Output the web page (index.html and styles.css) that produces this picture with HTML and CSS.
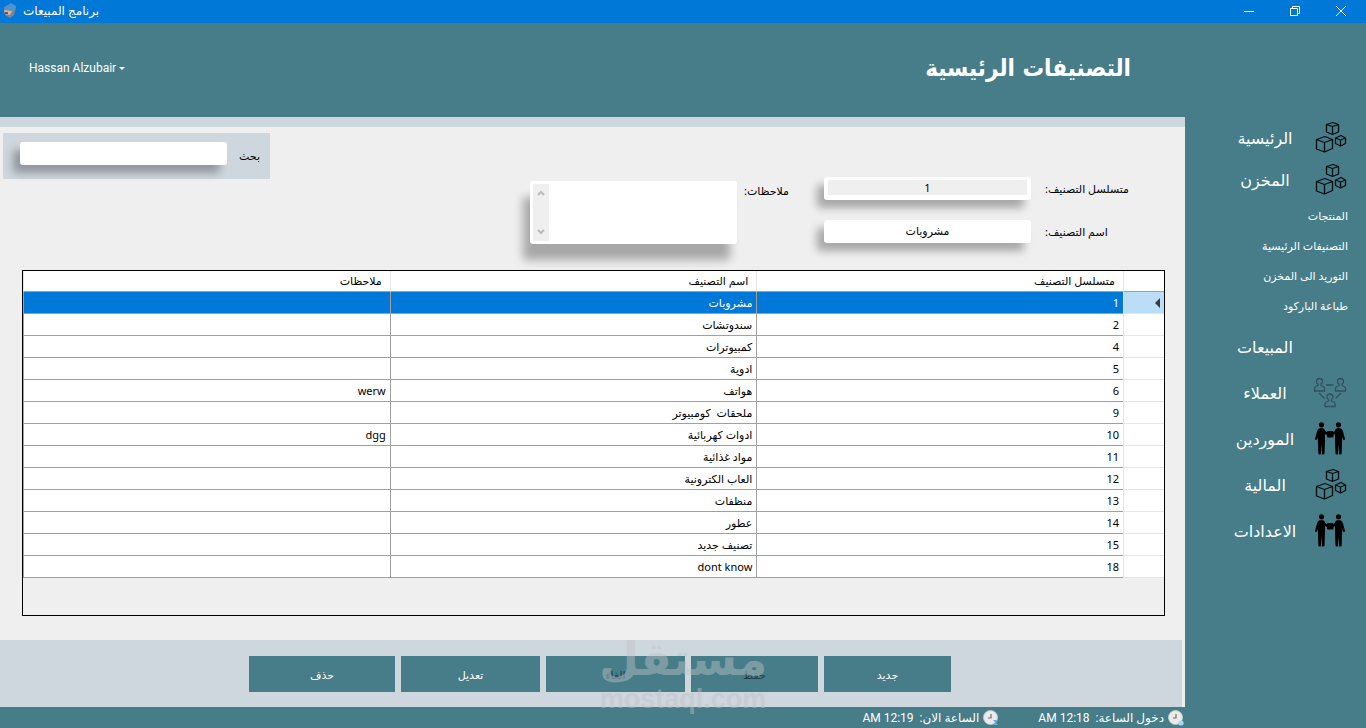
FILE: index.html
```html
<!DOCTYPE html>
<html lang="ar" dir="rtl">
<head>
    <meta charset="UTF-8">
    <title>برنامج المبيعات</title>
    <link rel="stylesheet" href="styles.css">
</head>
<body>
    <svg class="defs" width="0" height="0" aria-hidden="true">
        <symbol id="boxes" viewBox="0 0 36 34">
            <g fill="none" stroke="#0a0d10" stroke-width="1.3" stroke-linejoin="round">
                <path d="M13.5 3.5 L20 1.5 L25.5 3.5 V11 L19.5 13.5 L13.5 11 Z M13.5 3.5 L19.5 5.5 L25.5 3.5 M19.5 5.5 V13.5"/>
                <path d="M3.5 18.5 L12 15.5 L19.5 18.5 V27.5 L11.5 31 L3.5 28 Z M3.5 18.5 L11.5 21.5 L19.5 18.5 M11.5 21.5 V31"/>
                <path d="M22.5 17 L28 14.5 L32.5 17 V22.5 L27.5 25 L22.5 22.5 Z M22.5 17 L27.5 19 L32.5 17 M27.5 19 V25"/>
            </g>
        </symbol>
        <symbol id="people" viewBox="0 0 36 34">
            <g fill="none" stroke="#30505b" stroke-width="1.3" stroke-linejoin="round">
                <path id="p" d="M1.5 15 V12.5 Q1.5 10.5 5 9.5 L5 8 Q3 6.5 3.5 4.5 Q4.2 2.5 6.5 2.5 Q8.8 2.5 9.5 4.5 Q10 6.5 8 8 L8 9.5 Q11.5 10.5 11.5 12.5 V15 Z"/>
                <use href="#p" x="21"/>
                <use href="#p" x="10.5" y="15.5"/>
                <path d="M13 9 H20.5 M6 17 L11.5 22.5 M28 17 L22.5 22.5"/>
            </g>
        </symbol>
        <symbol id="workers" viewBox="0 0 36 34">
            <circle cx="8.5" cy="2.8" r="2.6"/>
            <circle cx="25.5" cy="2.8" r="2.6"/>
            <rect x="14" y="9" width="6.500" height="6.500" rx="1"/>
            <path id="w" d="M6.500 6.200 H10 Q11.500 6.500 12.200 9 L15 11 V13 L12 12.300 L12 19 L11.500 31.500 Q11.500 32.800 9 32.500 L8.700 22 L7.800 32.500 Q5.300 32.800 5.300 31.500 L4.800 15 L4 17.500 Q2.200 18.500 2 17 L4 9.500 Q4.800 6.500 6.500 6.200 Z"/>
            <use href="#w" transform="translate(34 0) scale(-1 1)"/>
        </symbol>
        <symbol id="clock" viewBox="0 0 16 16">
            <circle cx="7.5" cy="7.5" r="7" fill="#eceae6" stroke="#c9ccca" stroke-width=".8"/>
            <path d="M8 4 V8 H5" fill="none" stroke="#6b7178" stroke-width="1.2"/>
        </symbol>
    </svg>

    <div class="titlebar" dir="ltr">
        <svg class="app-icon" viewBox="0 0 14 16">
            <path d="M1 4 L8 1 L13 4 L11 12 L7 15 L2 12 Z" fill="#7b8790"/>
            <path d="M2 4 L8 0 L13 3 L12 7 L4 7 Z" fill="#4d92d5"/>
            <path d="M1 7 L9 8 L7 12 L2 11 Z" fill="#c9b9a6"/>
            <path d="M2 9 H5 V11 H2 Z" fill="#b33a35"/>
        </svg>
        <span class="app-title" dir="rtl">برنامج المبيعات</span>
        <div class="window-buttons">
            <button type="button" aria-label="تصغير"><svg viewBox="0 0 12 12"><path d="M1 6.5 H11"/></svg></button>
            <button type="button" aria-label="استعادة"><svg viewBox="0 0 12 12"><path d="M1.5 3.5 H8.5 V10.5 H1.5 Z M3.5 3.5 V1.5 H10.5 V8.5 H8.5"/></svg></button>
            <button type="button" aria-label="اغلاق"><svg viewBox="0 0 12 12"><path d="M1 1 L11 11 M11 1 L1 11"/></svg></button>
        </div>
    </div>

    <header class="header">
        <h1>التصنيفات الرئيسية</h1>
        <button type="button" class="user-menu" dir="ltr">Hassan Alzubair <span class="caret"></span></button>
    </header>

    <div class="layout">
        <nav class="sidebar">
            <a href="#" class="nav-item"><svg><use href="#boxes"/></svg><span>الرئيسية</span></a>
            <a href="#" class="nav-item"><svg><use href="#boxes"/></svg><span>المخزن</span></a>
            <div class="sub-nav">
                <a href="#">المنتجات</a>
                <a href="#">التصنيفات الرئيسية</a>
                <a href="#">التوريد الى المخزن</a>
                <a href="#">طباعة الباركود</a>
            </div>
            <a href="#" class="nav-item tall"><svg></svg><span>المبيعات</span></a>
            <a href="#" class="nav-item tall"><svg><use href="#people"/></svg><span>العملاء</span></a>
            <a href="#" class="nav-item tall"><svg><use href="#workers"/></svg><span>الموردين</span></a>
            <a href="#" class="nav-item tall"><svg><use href="#boxes"/></svg><span>المالية</span></a>
            <a href="#" class="nav-item tall"><svg><use href="#workers"/></svg><span>الاعدادات</span></a>
        </nav>

        <main class="content">
            <div class="form-area">
                <div class="fields">
                    <div class="field">
                        <label for="serial">متسلسل التصنيف:</label>
                        <div class="box"><input type="text" id="serial" class="readonly" value="1" readonly></div>
                    </div>
                    <div class="field">
                        <label for="name">اسم التصنيف:</label>
                        <div class="box"><input type="text" id="name" value="مشروبات"></div>
                    </div>
                </div>
                <div class="notes">
                    <label for="notes">ملاحظات:</label>
                    <div class="box notes-box">
                        <textarea id="notes"></textarea>
                        <div class="scroll">
                            <svg viewBox="0 0 8 6"><path d="M1 5 L4 2 L7 5"/></svg>
                            <svg viewBox="0 0 8 6"><path d="M1 1 L4 4 L7 1"/></svg>
                        </div>
                    </div>
                </div>
                <div class="search">
                    <label for="search">بحث</label>
                    <div class="box"><input type="text" id="search"></div>
                </div>
            </div>

            <div class="grid">
                <table>
                    <thead>
                        <tr><th class="row-head"></th><th>متسلسل التصنيف</th><th>اسم التصنيف</th><th>ملاحظات</th></tr>
                    </thead>
                    <tbody>
                        <tr class="selected"><td class="row-head"><span class="pointer"></span></td><td>1</td><td>مشروبات</td><td></td></tr>
                        <tr><td class="row-head"></td><td>2</td><td>سندوتشات</td><td></td></tr>
                        <tr><td class="row-head"></td><td>4</td><td>كمبيوترات</td><td></td></tr>
                        <tr><td class="row-head"></td><td>5</td><td>ادوية</td><td></td></tr>
                        <tr><td class="row-head"></td><td>6</td><td>هواتف</td><td>werw</td></tr>
                        <tr><td class="row-head"></td><td>9</td><td>ملحقات&nbsp; كومبيوتر</td><td></td></tr>
                        <tr><td class="row-head"></td><td>10</td><td>ادوات كهربائية</td><td>dgg</td></tr>
                        <tr><td class="row-head"></td><td>11</td><td>مواد غذائية</td><td></td></tr>
                        <tr><td class="row-head"></td><td>12</td><td>العاب الكترونية</td><td></td></tr>
                        <tr><td class="row-head"></td><td>13</td><td>منظفات</td><td></td></tr>
                        <tr><td class="row-head"></td><td>14</td><td>عطور</td><td></td></tr>
                        <tr><td class="row-head"></td><td>15</td><td>تصنيف جديد</td><td></td></tr>
                        <tr><td class="row-head"></td><td>18</td><td>dont know</td><td></td></tr>
                    </tbody>
                </table>
            </div>

            <div class="actions">
                <button type="button" class="small">جديد</button>
                <button type="button" class="small" disabled>حفظ</button>
                <button type="button" disabled>الغاء</button>
                <button type="button">تعديل</button>
                <button type="button" class="large">حذف</button>
                <div class="watermark">
                    <span class="mark-ar">مستقل</span>
                    <span class="mark-en">mostaql.com</span>
                </div>
            </div>
        </main>
    </div>

    <footer class="statusbar">
        <div class="status"><svg viewBox="0 0 16 16"><use href="#clock"/><circle cx="13" cy="13" r="2.6" fill="#a9d6f2"/></svg><span>دخول الساعة:&nbsp; 12:18 AM</span></div>
        <div class="status"><svg viewBox="0 0 16 16"><use href="#clock"/><path d="M10 10 H15 L13 12.5 L15 15 H10 L12 12.5 Z" fill="#5fb0e6"/></svg><span>الساعة الان:&nbsp; 12:19 AM</span></div>
    </footer>
</body>
</html>
```
FILE: styles.css
```css
* {
    box-sizing: border-box;
}
body {
    margin: 0;
    min-height: 100vh;
    display: flex;
    flex-direction: column;
    background: #467d89;
    color: #000;
    font-family: "Noto Sans", "DejaVu Sans", sans-serif;
    font-size: 11px;
}
button, input, textarea {
    font-family: inherit;
    font-size: inherit;
    border: none;
    padding: 0;
}
a {
    color: #fff;
    text-decoration: none;
}
.defs {
    position: absolute;
}

/* title bar */
.titlebar {
    display: flex;
    align-items: center;
    height: 23px;
    padding: 0 2px 2px 3px;
    background: #0078d7;
    color: #fff;
}
.app-icon {
    width: 14px;
    height: 16px;
}
.app-title {
    margin-left: 6px;
    font-size: 12px;
    line-height: 20px;
}
.window-buttons {
    display: flex;
    margin-left: auto;
}
.window-buttons button {
    width: 46px;
    height: 20px;
    background: none;
}
.window-buttons svg {
    display: block;
    width: 12px;
    height: 12px;
    margin: 0 auto;
    fill: none;
    stroke: #fff;
}

/* header */
.header {
    display: flex;
    align-items: center;
    justify-content: space-between;
    height: 94px;
    padding: 0 235px 4px 29px;
    color: #fff;
}
h1 {
    margin: 0;
    font-family: "DejaVu Sans Condensed", "DejaVu Sans", sans-serif;
    font-size: 24px;
    font-weight: bold;
}
.user-menu {
    display: flex;
    align-items: center;
    gap: 3px;
    background: none;
    color: #fff;
    font-family: Roboto, sans-serif;
    font-size: 12px;
}
.caret {
    border: 3px solid transparent;
    border-top-color: #fff;
    border-bottom: none;
}

.layout {
    flex: 1;
    display: flex;
}

/* sidebar */
.sidebar {
    width: 181px;
}
.nav-item {
    display: flex;
    align-items: center;
    gap: 8px;
    height: 42px;
    padding-right: 17px;
    font-size: 16px;
}
.nav-item.tall {
    height: 46px;
}
.nav-item svg {
    width: 36px;
    height: 34px;
}
.nav-item span {
    width: 80px;
    text-align: center;
}
.sub-nav {
    padding: 0 18px 3px 0;
}
.sub-nav a {
    display: block;
    line-height: 30px;
}

/* content */
.content {
    flex: 1;
    display: flex;
    flex-direction: column;
    background: #efefef;
    border-top: 10px solid #cfd7de;
}
.form-area {
    display: flex;
    align-items: flex-start;
    height: 143px;
    padding: 6px 50px 0 3px;
}
.fields {
    display: flex;
    flex-direction: column;
    gap: 20px;
    padding-top: 44px;
}
.field {
    display: flex;
    align-items: center;
    gap: 14px;
}
.field label {
    width: 90px;
    text-align: left;
    white-space: nowrap;
}
.box {
    width: 207px;
    height: 23px;
    padding: 3px 4px;
    background: #fff;
    border-radius: 3px;
    box-shadow: -7px 8px 8px rgba(0, 0, 0, 0.3);
}
.box input {
    display: block;
    width: 100%;
    height: 15px;
    background: #fff;
    text-align: center;
}
.box .readonly {
    background: #efefef;
}
.notes {
    display: flex;
    gap: 7px;
    padding: 48px 35px 0 0;
}
.notes label {
    width: 45px;
    line-height: 20px;
}
.notes-box {
    display: flex;
    height: 63px;
    padding: 3px;
    box-shadow: -7px 16px 10px rgba(0, 0, 0, 0.3);
}
.notes-box textarea {
    flex: 1;
    min-width: 0;
    resize: none;
    background: #fff;
}
.scroll {
    display: flex;
    flex-direction: column;
    justify-content: space-between;
    align-items: center;
    width: 16px;
    padding: 6px 0;
    background: #efefef;
}
.scroll svg {
    width: 8px;
    height: 6px;
    fill: none;
    stroke: #bbb;
    stroke-width: 2;
}
.search {
    display: flex;
    align-items: center;
    gap: 12px;
    height: 46px;
    margin-right: auto;
    padding: 0 10px 6px 17px;
    background: #cfd7de;
}
.search label {
    padding-top: 4px;
}

/* data grid */
.grid {
    flex: 1;
    margin: 0 20px 24px 22px;
    border: 1px solid #000;
}
table {
    width: 100%;
    table-layout: fixed;
    border-collapse: separate;
    border-spacing: 0;
    background: #fff;
}
th, td {
    height: 22px;
    padding: 0 4px;
    border-left: 1px solid #a0a0a0;
    border-bottom: 1px solid #a0a0a0;
    text-align: right;
    font-weight: normal;
    line-height: 20px;
}
th {
    height: 21px;
    padding: 0 8px;
    border-left-color: #e5e5e5;
}
td.row-head {
    border-color: #e5e5e5;
}
.row-head {
    width: 41px;
}
.selected td {
    background: #0078d7;
    color: #fff;
}
.selected .row-head {
    background: #bbddf5;
}
.pointer {
    display: block;
    width: 5px;
    border: 5px solid transparent;
    border-right-color: #2f3f4a;
    border-left: none;
}

/* bottom buttons */
.actions {
    position: relative;
    display: flex;
    justify-content: center;
    gap: 6px;
    height: 67px;
    margin-right: 3px;
    padding: 16px 0 15px 18px;
    background: #cfd7de;
}
.actions button {
    width: 139px;
    background: #467d89;
    color: #fff;
}
.actions .small {
    width: 127px;
}
.actions .large {
    width: 146px;
}
.actions button:disabled {
    color: #263f4a;
}
.watermark {
    position: absolute;
    top: -6px;
    left: 600px;
    width: 166px;
    display: flex;
    flex-direction: column;
    align-items: center;
    color: #bfc3c6;
    font-weight: bold;
    opacity: 0.45;
    pointer-events: none;
}
.mark-ar {
    font-family: "DejaVu Sans", sans-serif;
    font-size: 46px;
    line-height: 50px;
}
.mark-en {
    font-family: "Liberation Sans", sans-serif;
    font-size: 27px;
    line-height: 30px;
}

/* status bar */
.statusbar {
    display: flex;
    align-items: center;
    gap: 39px;
    height: 21px;
    padding-right: 182px;
    color: #fff;
    font-family: Roboto, "DejaVu Sans", sans-serif;
    font-size: 12px;
}
.status {
    display: flex;
    align-items: center;
    gap: 4px;
    line-height: 20px;
}
.status svg {
    width: 16px;
    height: 16px;
}
```
